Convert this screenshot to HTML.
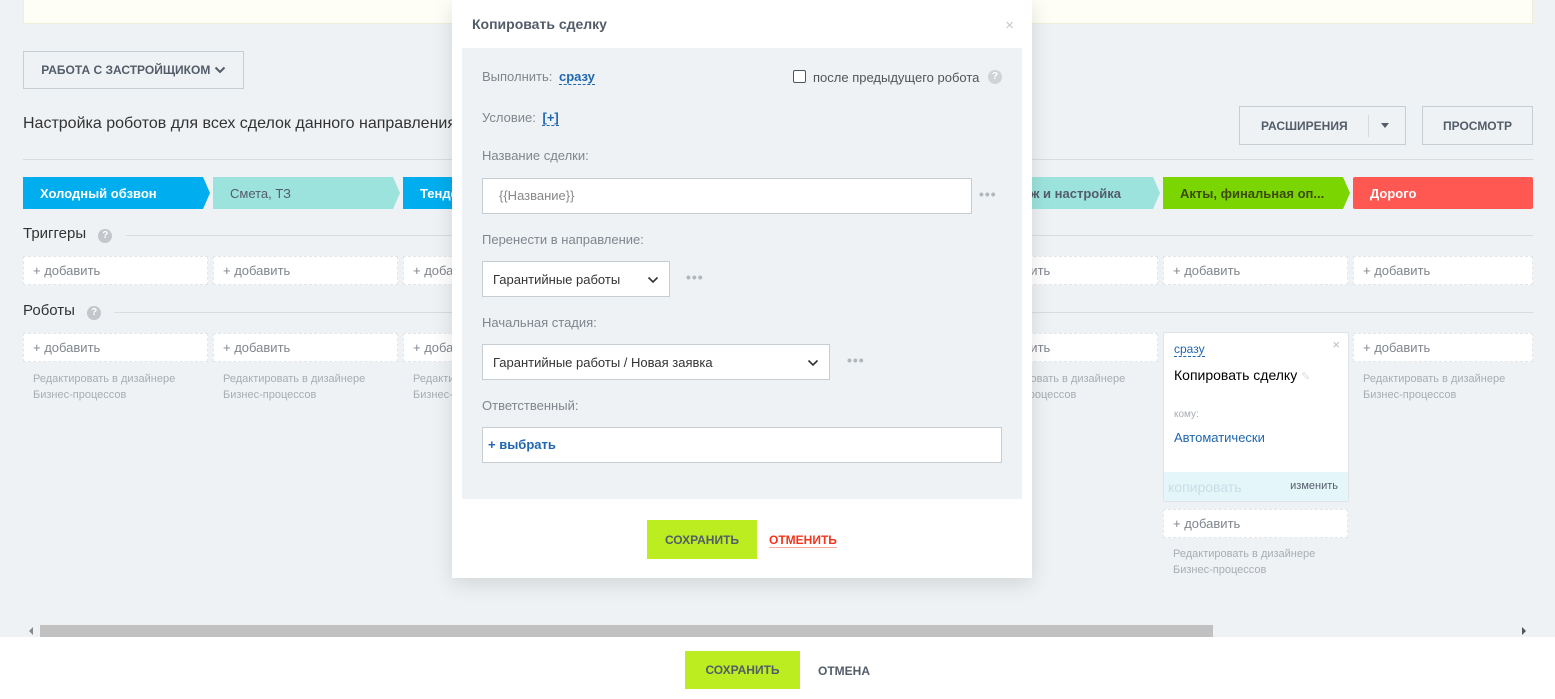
<!DOCTYPE html>
<html><head><meta charset="utf-8">
<style>
*{box-sizing:border-box;margin:0;padding:0}
body{width:1555px;height:699px;overflow:hidden;background:#eef2f4;font-family:"Liberation Sans","Noto Sans CJK SC",sans-serif;position:relative;color:#333}
.abs{position:absolute}
.topbox{left:23px;top:-2px;width:1510px;height:26px;background:#fefef7;border:1px solid #efefd8}
.btn{border:1px solid #c6cdd3;background:transparent;font-weight:bold;font-size:12px;color:#535c69;display:flex;align-items:center;justify-content:center}
.stage{top:177px;height:32px;font-size:13px;font-weight:bold;display:flex;align-items:center;padding-left:17px;white-space:nowrap;overflow:hidden;clip-path:polygon(0 0,calc(100% - 7px) 0,100% 50%,calc(100% - 7px) 100%,0 100%)}
.hline{height:1px;background:#d9dde1}
.add{height:29px;background:#fff;border:1px dashed #e3e6e9;font-size:13px;color:#80868e;padding-left:9px;line-height:27px;width:185px}
.hint{font-size:11px;color:#a8adb4;line-height:16px;width:185px;padding-left:10px}
.sec{font-size:15px;color:#333}
.q{display:inline-block;width:14px;height:14px;border-radius:50%;background:#c3c6ca;color:#fff;font-size:10px;text-align:center;line-height:14px;font-weight:bold}
.modal{left:452px;top:0;width:580px;height:578px;background:#fff;box-shadow:0 6px 20px rgba(0,0,0,.12)}
.lbl{font-size:13px;color:#80868e}
.inp{background:#fff;border:1px solid #c6cdd3;font-size:13px;color:#333}
.dots{color:#b1b6bc;font-size:14px;letter-spacing:1px;font-weight:bold}
</style></head><body>
<div class="abs topbox"></div>
<div class="abs btn" style="left:23px;top:51px;width:221px;height:38px">РАБОТА С ЗАСТРОЙЩИКОМ&nbsp;<svg width="12" height="8" viewBox="0 0 12 8"><path d="M1.5 1.5L6 6 10.5 1.5" fill="none" stroke="#535c69" stroke-width="2"/></svg></div>
<div class="abs" style="left:23px;top:115px;font-size:16px;color:#333">Настройка роботов для всех сделок данного направления</div>
<div class="abs btn" style="left:1239px;top:106px;width:167px;height:39px;justify-content:flex-start;padding-left:21px">РАСШИРЕНИЯ<span style="position:absolute;left:128px;top:8px;width:1px;height:22px;background:#d5d9dd"></span><span style="position:absolute;left:141px;top:16px;border:4px solid transparent;border-top:5px solid #535c69"></span></div>
<div class="abs btn" style="left:1422px;top:106px;width:111px;height:39px">ПРОСМОТР</div>
<div class="abs hline" style="left:23px;top:159px;width:1510px"></div>

<div class="abs stage" style="left:23px;width:187px;background:#00aeef;color:#fff">Холодный обзвон</div>
<div class="abs stage" style="left:213px;width:187px;background:#9de3dd;color:#535c69;font-weight:normal">Смета, ТЗ</div>
<div class="abs stage" style="left:403px;width:187px;background:#00aeef;color:#fff">Тендер</div>
<div class="abs stage" style="left:973px;width:187px;background:#9de3dd;color:#535c69">Монтаж и настройка</div>
<div class="abs stage" style="left:1163px;width:187px;background:#7bd500;color:#3c4a10">Акты, финальная оп...</div>
<div class="abs stage" style="left:1353px;width:180px;background:#ff5752;color:#fff;clip-path:none;border-radius:2px">Дорого</div>

<div class="abs sec" style="left:23px;top:225px">Триггеры <span class="q" style="margin-left:8px">?</span></div>
<div class="abs hline" style="left:126px;top:235px;width:1407px"></div>
<div class="abs sec" style="left:23px;top:302px">Роботы <span class="q" style="margin-left:8px">?</span></div>
<div class="abs hline" style="left:114px;top:312px;width:1419px"></div>

<div class="abs add" style="left:23px;top:256px">+ добавить</div>
<div class="abs add" style="left:213px;top:256px">+ добавить</div>
<div class="abs add" style="left:403px;top:256px">+ добавить</div>
<div class="abs add" style="left:973px;top:256px">+ добавить</div>
<div class="abs add" style="left:1163px;top:256px">+ добавить</div>
<div class="abs add" style="left:1353px;top:256px;width:180px">+ добавить</div>

<div class="abs add" style="left:23px;top:333px">+ добавить</div>
<div class="abs add" style="left:213px;top:333px">+ добавить</div>
<div class="abs add" style="left:403px;top:333px">+ добавить</div>
<div class="abs add" style="left:973px;top:333px">+ добавить</div>
<div class="abs add" style="left:1353px;top:333px;width:180px">+ добавить</div>
<div class="abs hint" style="left:23px;top:371px">Редактировать в дизайнере<br>Бизнес-процессов</div>
<div class="abs hint" style="left:213px;top:371px">Редактировать в дизайнере<br>Бизнес-процессов</div>
<div class="abs hint" style="left:403px;top:371px">Редактировать в дизайнере<br>Бизнес-процессов</div>
<div class="abs hint" style="left:973px;top:371px">Редактировать в дизайнере<br>Бизнес-процессов</div>
<div class="abs hint" style="left:1353px;top:371px">Редактировать в дизайнере<br>Бизнес-процессов</div>

<div class="abs" style="left:1163px;top:332px;width:186px;height:170px;background:#fff;border:1px solid #dde3e8;border-radius:2px">
 <div class="abs" style="left:10px;top:10px;font-size:12px;color:#2067b0;border-bottom:1px dashed #2067b0;line-height:13px">сразу</div>
 <div class="abs" style="right:8px;top:4px;color:#b9bec4;font-size:13px">×</div>
 <div class="abs" style="left:10px;top:34px;font-size:14px;color:#000">Копировать сделку <span style="color:#ddd;font-size:11px">✎</span></div>
 <div class="abs" style="left:10px;top:76px;font-size:10px;color:#a8adb4">кому:</div>
 <div class="abs" style="left:10px;top:97px;font-size:13px;color:#2067b0">Автоматически</div>
 <div class="abs" style="left:0;bottom:0;width:100%;height:29px;background:#e5f6fb;"><span class="abs" style="left:4px;top:7px;font-size:14px;color:#c9dde5">копировать</span><span class="abs" style="right:10px;top:8px;font-size:11px;color:#535c69">изменить</span></div>
</div>
<div class="abs add" style="left:1163px;top:509px">+ добавить</div>
<div class="abs hint" style="left:1163px;top:546px">Редактировать в дизайнере<br>Бизнес-процессов</div>

<div class="abs" style="left:0;top:625px;width:1555px;height:12px;background:#eef2f4"></div>
<div class="abs" style="left:40px;top:625px;width:1173px;height:12px;background:#c1c1c1"></div>
<div class="abs" style="left:29px;top:627px;border:4px solid transparent;border-right:4px solid #888;border-left:0"></div>
<div class="abs" style="left:1522px;top:627px;border:4px solid transparent;border-left:4px solid #555;border-right:0"></div>
<div class="abs" style="left:0;top:637px;width:1555px;height:62px;background:#fff"></div>
<div class="abs btn" style="left:685px;top:651px;width:115px;height:38px;background:#bbed21;border:none">СОХРАНИТЬ</div>
<div class="abs" style="left:818px;top:664px;font-size:12px;font-weight:bold;color:#535c69">ОТМЕНА</div>

<div class="abs modal">
 <div class="abs" style="left:20px;top:16px;font-size:14px;font-weight:bold;color:#535c69">Копировать сделку</div>
 <div class="abs" style="right:18px;top:17px;color:#c5c9cd;font-size:15px">×</div>
 <div class="abs" style="left:10px;top:48px;width:560px;height:451px;background:#eef2f4">
  <div class="abs lbl" style="left:20px;top:21px">Выполнить: <span style="color:#2067b0;font-weight:bold;border-bottom:1px dashed #2067b0;margin-left:3px">сразу</span></div>
  <div class="abs" style="left:331px;top:22px;width:13px;height:13px;border:1px solid #555;border-radius:2px;background:#fff"></div>
  <div class="abs lbl" style="left:351px;top:22px;color:#555">после предыдущего робота</div>
  <div class="abs q" style="left:526px;top:22px;background:#d0d3d6">?</div>
  <div class="abs lbl" style="left:20px;top:62px">Условие: <span style="color:#2067b0;font-weight:bold;border-bottom:1px dashed #2067b0;margin-left:3px">[+]</span></div>
  <div class="abs lbl" style="left:20px;top:100px">Название сделки:</div>
  <div class="abs inp" style="left:20px;top:130px;width:490px;height:36px;color:#888;padding:9px 16px">{{Название}}</div>
  <div class="abs dots" style="left:517px;top:138px">•••</div>
  <div class="abs lbl" style="left:20px;top:184px">Перенести в направление:</div>
  <div class="abs inp" style="left:20px;top:213px;width:188px;height:36px;padding:10px 10px">Гарантийные работы<svg class="abs" style="right:10px;top:14px" width="12" height="8" viewBox="0 0 12 8"><path d="M1.5 1.5L6 6 10.5 1.5" fill="none" stroke="#333" stroke-width="1.6"/></svg></div>
  <div class="abs dots" style="left:224px;top:221px">•••</div>
  <div class="abs lbl" style="left:20px;top:267px">Начальная стадия:</div>
  <div class="abs inp" style="left:20px;top:296px;width:348px;height:36px;padding:10px 10px">Гарантийные работы / Новая заявка<svg class="abs" style="right:10px;top:14px" width="12" height="8" viewBox="0 0 12 8"><path d="M1.5 1.5L6 6 10.5 1.5" fill="none" stroke="#333" stroke-width="1.6"/></svg></div>
  <div class="abs dots" style="left:385px;top:304px">•••</div>
  <div class="abs lbl" style="left:20px;top:350px">Ответственный:</div>
  <div class="abs inp" style="left:20px;top:379px;width:520px;height:36px;padding:9px 5px;color:#2067b0;font-weight:bold">+ выбрать</div>
 </div>
 <div class="abs btn" style="left:195px;top:520px;width:110px;height:39px;background:#bbed21;border:none">СОХРАНИТЬ</div>
 <div class="abs" style="left:317px;top:533px;font-size:12px;font-weight:bold;color:#f1361b;border-bottom:1px solid #f9a99d;line-height:14px">ОТМЕНИТЬ</div>
</div>
</body></html>
